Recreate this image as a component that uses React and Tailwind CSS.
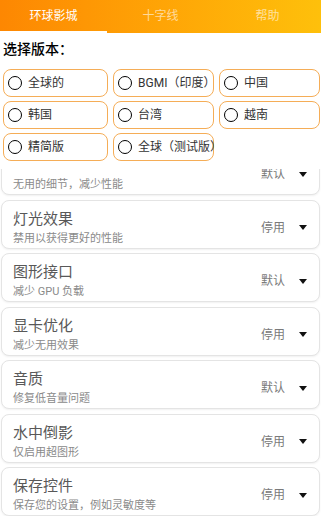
import React from "react";

const versions = [
  "全球的",
  "BGMI（印度）",
  "中国",
  "韩国",
  "台湾",
  "越南",
  "精简版",
  "全球（测试版）",
];

// first row sits under the picker, only its lower half shows
const settings = [
  { title: "", desc: "无用的细节，减少性能", value: "默认" },
  { title: "灯光效果", desc: "禁用以获得更好的性能", value: "停用" },
  { title: "图形接口", desc: "减少 GPU 负载", value: "默认" },
  { title: "显卡优化", desc: "减少无用效果", value: "停用" },
  { title: "音质", desc: "修复低音量问题", value: "默认" },
  { title: "水中倒影", desc: "仅启用超图形", value: "停用" },
  { title: "保存控件", desc: "保存您的设置，例如灵敏度等", value: "停用" },
];

const tabs = ["环球影城", "十字线", "帮助"];

const SettingCard = ({ item, first }) => (
  <div
    className={`flex h-[49px] mb-[4.5px] ml-[1px] w-[319px] bg-white border border-[#e4e4e4] rounded-lg shadow-[0_1px_2px_rgba(0,0,0,0.06)] pl-[11px] pr-[12px] ${
      first ? "-mt-[23px]" : ""
    }`}
  >
    <div className="flex-1 flex flex-col pt-[9px]">
      <span className="h-[19px] text-[15px] leading-[19px] text-[#585858]">{item.title}</span>
      <span className="text-[11px] leading-[15px] mt-[2px] text-[#8a8a8a]">{item.desc}</span>
    </div>
    <div className="flex items-center pt-[7px]">
      <span className="text-[12px] text-[#7a7a7a] mr-[14px]">{item.value}</span>
      <svg width="8" height="5" viewBox="0 0 8 5">
        <path d="M0 0 H8 L4 5 Z" fill="#111" />
      </svg>
    </div>
  </div>
);

const App = () => {
  return (
    <div
      className="w-[321px] h-[516px] overflow-hidden bg-white flex flex-col"
      style={{ fontFamily: 'Roboto, "Noto Sans CJK SC", sans-serif' }}
    >
      {/* top tabs */}
      <div className="h-[33px] shrink-0 flex bg-gradient-to-r from-[#fd8702] to-[#fec00b] shadow-[0_1px_2px_rgba(0,0,0,0.12)]">
        {tabs.map((t, i) => (
          <div
            key={t}
            className={`flex-1 flex items-center justify-center text-[12px] border-b-2 ${
              i === 0 ? "text-white border-white" : "text-white/60 border-transparent"
            }`}
          >
            {t}
          </div>
        ))}
      </div>

      {/* version picker */}
      <div className="shrink-0 bg-white relative z-10 pl-[3px] pr-[1px] pb-[8px]">
        <div className="text-[14px] font-medium text-black mt-[7px] leading-[18px]">选择版本：</div>
        <div className="grid grid-cols-[105px_101px_1fr] gap-x-[5px] gap-y-[4px] mt-[11px]">
          {versions.map((v) => (
            <div
              key={v}
              className="h-[28px] flex items-center border border-[#f5ad57] rounded-[8px] pl-[4px]"
            >
              <span className="w-[14px] h-[14px] rounded-full border-[1.5px] border-black shrink-0"></span>
              <span className="ml-[6px] text-[12px] text-[#333] whitespace-nowrap">{v}</span>
            </div>
          ))}
        </div>
      </div>

      {/* settings list */}
      <div className="flex-1 overflow-hidden">
        {settings.map((s, i) => (
          <SettingCard key={s.desc} item={s} first={i === 0} />
        ))}
      </div>
    </div>
  );
};

export default App;
